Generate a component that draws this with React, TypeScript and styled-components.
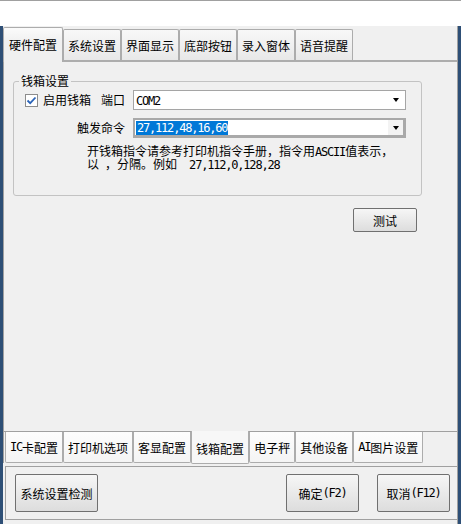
import React from "react";
import styled, { createGlobalStyle } from "styled-components";

const GlobalStyle = createGlobalStyle`
  html, body {
    margin: 0;
    padding: 0;
  }
  body {
    background: #2e4f76;
    font-family: "Noto Sans CJK SC", "Noto Sans", sans-serif;
    font-size: 12px;
    color: #000;
  }
`;

const Screen = styled.div`
  width: 461px;
  height: 524px;
  display: flex;
  flex-direction: column;
  overflow: hidden;
`;

const TitleBand = styled.div`
  height: 25px;
  background: #fff;
  border-top: 1px solid #a0a0a0;
`;

const Window = styled.div`
  flex: 1;
  display: flex;
  flex-direction: column;
  margin: 0 3px;
  background: #f0f0f0;
  border-right: 1px solid #a0a0a0;
`;

const Mono = styled.span`
  font-family: "DejaVu Sans Mono", monospace;
  font-size: 12px;
  letter-spacing: -1.2px;
  white-space: pre;
`;

/* top tabs */
const TabStrip = styled.div`
  display: flex;
  align-items: flex-start;
  height: 34px;
`;

const TopTab = styled.div<{ $active?: boolean }>`
  position: relative;
  z-index: 1;
  box-sizing: border-box;
  display: flex;
  align-items: center;
  margin-top: ${(p) => (p.$active ? 1 : 3)}px;
  height: ${(p) => (p.$active ? 35 : 31)}px;
  padding: ${(p) => (p.$active ? "0 5px 2px" : "0 4px")};
  border: 1px solid #acacac;
  border-bottom: none;
  border-radius: 2px 2px 0 0;
  background: ${(p) =>
    p.$active ? "linear-gradient(#fbfbfb, #f0f0f0 40%)" : "linear-gradient(#f8f8f8, #e8e8e8)"};
  white-space: nowrap;
`;

const OuterPage = styled.div`
  display: flex;
  flex-direction: column;
  border-top: 2px solid #adadad;
  border-left: 1px solid #a0a0a0;
`;

const InnerPage = styled.div`
  height: 369px;
  border-bottom: 1px solid #a0a0a0;
  display: flex;
  flex-direction: column;
`;

/* group box */
const GroupBox = styled.fieldset`
  box-sizing: border-box;
  height: 121px;
  margin: 13px 35px 0 9px;
  padding: 0;
  min-width: 0;
  border: 1px solid #c3c3c3;
  border-radius: 3px;
`;

const Legend = styled.legend`
  margin-left: 5px;
  padding: 0 2px;
  line-height: 12px;
`;

const FieldGrid = styled.div`
  display: grid;
  grid-template-columns: 100px 273px;
  grid-template-rows: 20px 20px;
  column-gap: 8px;
  row-gap: 8px;
  margin: 3px 0 0 11px;
`;

const FieldLabel = styled.div`
  display: flex;
  align-items: center;
  justify-content: flex-end;
  gap: 5px;
  line-height: 12px;
`;

const Spacer = styled.span`
  flex: 1;
`;

const CheckBox = styled.span`
  box-sizing: border-box;
  width: 13px;
  height: 13px;
  border: 1px solid #8c8c8c;
  background: #fff;
  display: flex;
  align-items: center;
  justify-content: center;
`;

const Combo = styled.div<{ $focused?: boolean }>`
  box-sizing: border-box;
  height: 20px;
  display: flex;
  align-items: center;
  background: #fff;
  border: ${(p) => (p.$focused ? "2px solid #a9a9a9" : "1px solid #a5a5a5")};
  border-right-width: ${(p) => (p.$focused ? 3 : 1)}px;
  border-bottom-width: ${(p) => (p.$focused ? 3 : 1)}px;
  padding-left: ${(p) => (p.$focused ? 1 : 2)}px;
`;

const ComboText = styled.span`
  flex: 1;
  line-height: 13px;
`;

const Selected = styled(Mono)`
  background: #0078d7;
  color: #fff;
  padding: 0 1px;
`;

const DropButton = styled.span<{ $focused?: boolean }>`
  align-self: stretch;
  width: ${(p) => (p.$focused ? 15 : 18)}px;
  display: flex;
  align-items: center;
  justify-content: center;
  background: ${(p) => (p.$focused ? "#f3f3f3" : "transparent")};
`;

const Arrow = styled.span`
  width: 0;
  height: 0;
  border-left: 3.5px solid transparent;
  border-right: 3.5px solid transparent;
  border-top: 4px solid #000;
`;

const Hint = styled.div`
  margin: 7px 0 0 73px;
  line-height: 13px;
`;

const HintLine = styled.div`
  white-space: pre;
  height: 12px;
  line-height: 12px;
  & + & {
    margin-top: 1px;
  }
`;

const ButtonRow = styled.div`
  display: flex;
  justify-content: flex-end;
  padding: 12px 40px 0 0;
`;

const Button = styled.button<{ $w: number; $h: number }>`
  box-sizing: border-box;
  width: ${(p) => p.$w}px;
  height: ${(p) => p.$h}px;
  padding: 0;
  font: inherit;
  color: #000;
  border: 1px solid #707070;
  border-radius: 2px;
  background: linear-gradient(#f6f6f6, #dddddd);
  display: flex;
  align-items: center;
  justify-content: center;
`;

/* bottom tabs */
const BottomStrip = styled.div`
  display: flex;
  align-items: flex-start;
  height: 31px;
  padding-left: 1px;
`;

const BottomTab = styled.div<{ $active?: boolean }>`
  position: relative;
  box-sizing: border-box;
  display: flex;
  align-items: center;
  height: ${(p) => (p.$active ? 33 : 31)}px;
  margin-top: ${(p) => (p.$active ? -1 : 0)}px;
  padding: ${(p) => (p.$active ? "2px 4px 0" : "0 4px")};
  border: 1px solid #acacac;
  border-top: none;
  border-radius: 0 0 2px 2px;
  background: ${(p) => (p.$active ? "#f7f7f7" : "linear-gradient(#fdfdfd, #f4f4f4)")};
  white-space: nowrap;
`;

const ActionBar = styled.div`
  box-sizing: border-box;
  height: 54px;
  margin: 3px 0 4px 2px;
  border: 1px solid #a0a0a0;
  border-right: none;
  display: flex;
  align-items: center;
  gap: 18px;
  padding: 0 7px 0 9px;
`;

const Push = styled.span`
  flex: 1;
`;

const topTabs = ["硬件配置", "系统设置", "界面显示", "底部按钮", "录入窗体", "语音提醒"];

export default function App() {
  return (
    <>
      <GlobalStyle />
      <Screen>
        <TitleBand />
        <Window>
          <TabStrip>
            {topTabs.map((t, i) => (
              <TopTab key={t} $active={i === 0}>
                {t}
              </TopTab>
            ))}
          </TabStrip>
          <OuterPage>
            <InnerPage>
              <GroupBox>
                <Legend>钱箱设置</Legend>
                <FieldGrid>
                  <FieldLabel>
                    <CheckBox>
                      <svg width="11" height="11" viewBox="0 0 11 11">
                        <polyline
                          points="1.5,5.5 4.2,8.2 9.5,2.5"
                          fill="none"
                          stroke="#2a63b8"
                          strokeWidth="1.8"
                        />
                      </svg>
                    </CheckBox>
                    启用钱箱
                    <Spacer />
                    端口
                  </FieldLabel>
                  <Combo>
                    <ComboText>
                      <Mono>COM2</Mono>
                    </ComboText>
                    <DropButton>
                      <Arrow />
                    </DropButton>
                  </Combo>
                  <FieldLabel>触发命令</FieldLabel>
                  <Combo $focused>
                    <ComboText>
                      <Selected>27,112,48,16,60</Selected>
                    </ComboText>
                    <DropButton $focused>
                      <Arrow />
                    </DropButton>
                  </Combo>
                </FieldGrid>
                <Hint>
                  <HintLine>
                    开钱箱指令请参考打印机指令手册，指令用<Mono>ASCII</Mono>值表示，
                  </HintLine>
                  <HintLine>
                    以<Mono> </Mono>，分隔。例如<Mono>  27,112,0,128,28</Mono>
                  </HintLine>
                </Hint>
              </GroupBox>
              <ButtonRow>
                <Button $w={64} $h={24}>测试</Button>
              </ButtonRow>
            </InnerPage>
            <BottomStrip>
              <BottomTab>
                <Mono>IC</Mono>卡配置
              </BottomTab>
              <BottomTab>打印机选项</BottomTab>
              <BottomTab>客显配置</BottomTab>
              <BottomTab $active>钱箱配置</BottomTab>
              <BottomTab>电子秤</BottomTab>
              <BottomTab>其他设备</BottomTab>
              <BottomTab>
                <Mono>AI</Mono>图片设置
              </BottomTab>
            </BottomStrip>
          </OuterPage>
          <ActionBar>
            <Button $w={83} $h={38}>系统设置检测</Button>
            <Push />
            <Button $w={73} $h={38}>
              确定<Mono>(F2)</Mono>
            </Button>
            <Button $w={73} $h={38}>
              取消<Mono>(F12)</Mono>
            </Button>
          </ActionBar>
        </Window>
      </Screen>
    </>
  );
}
